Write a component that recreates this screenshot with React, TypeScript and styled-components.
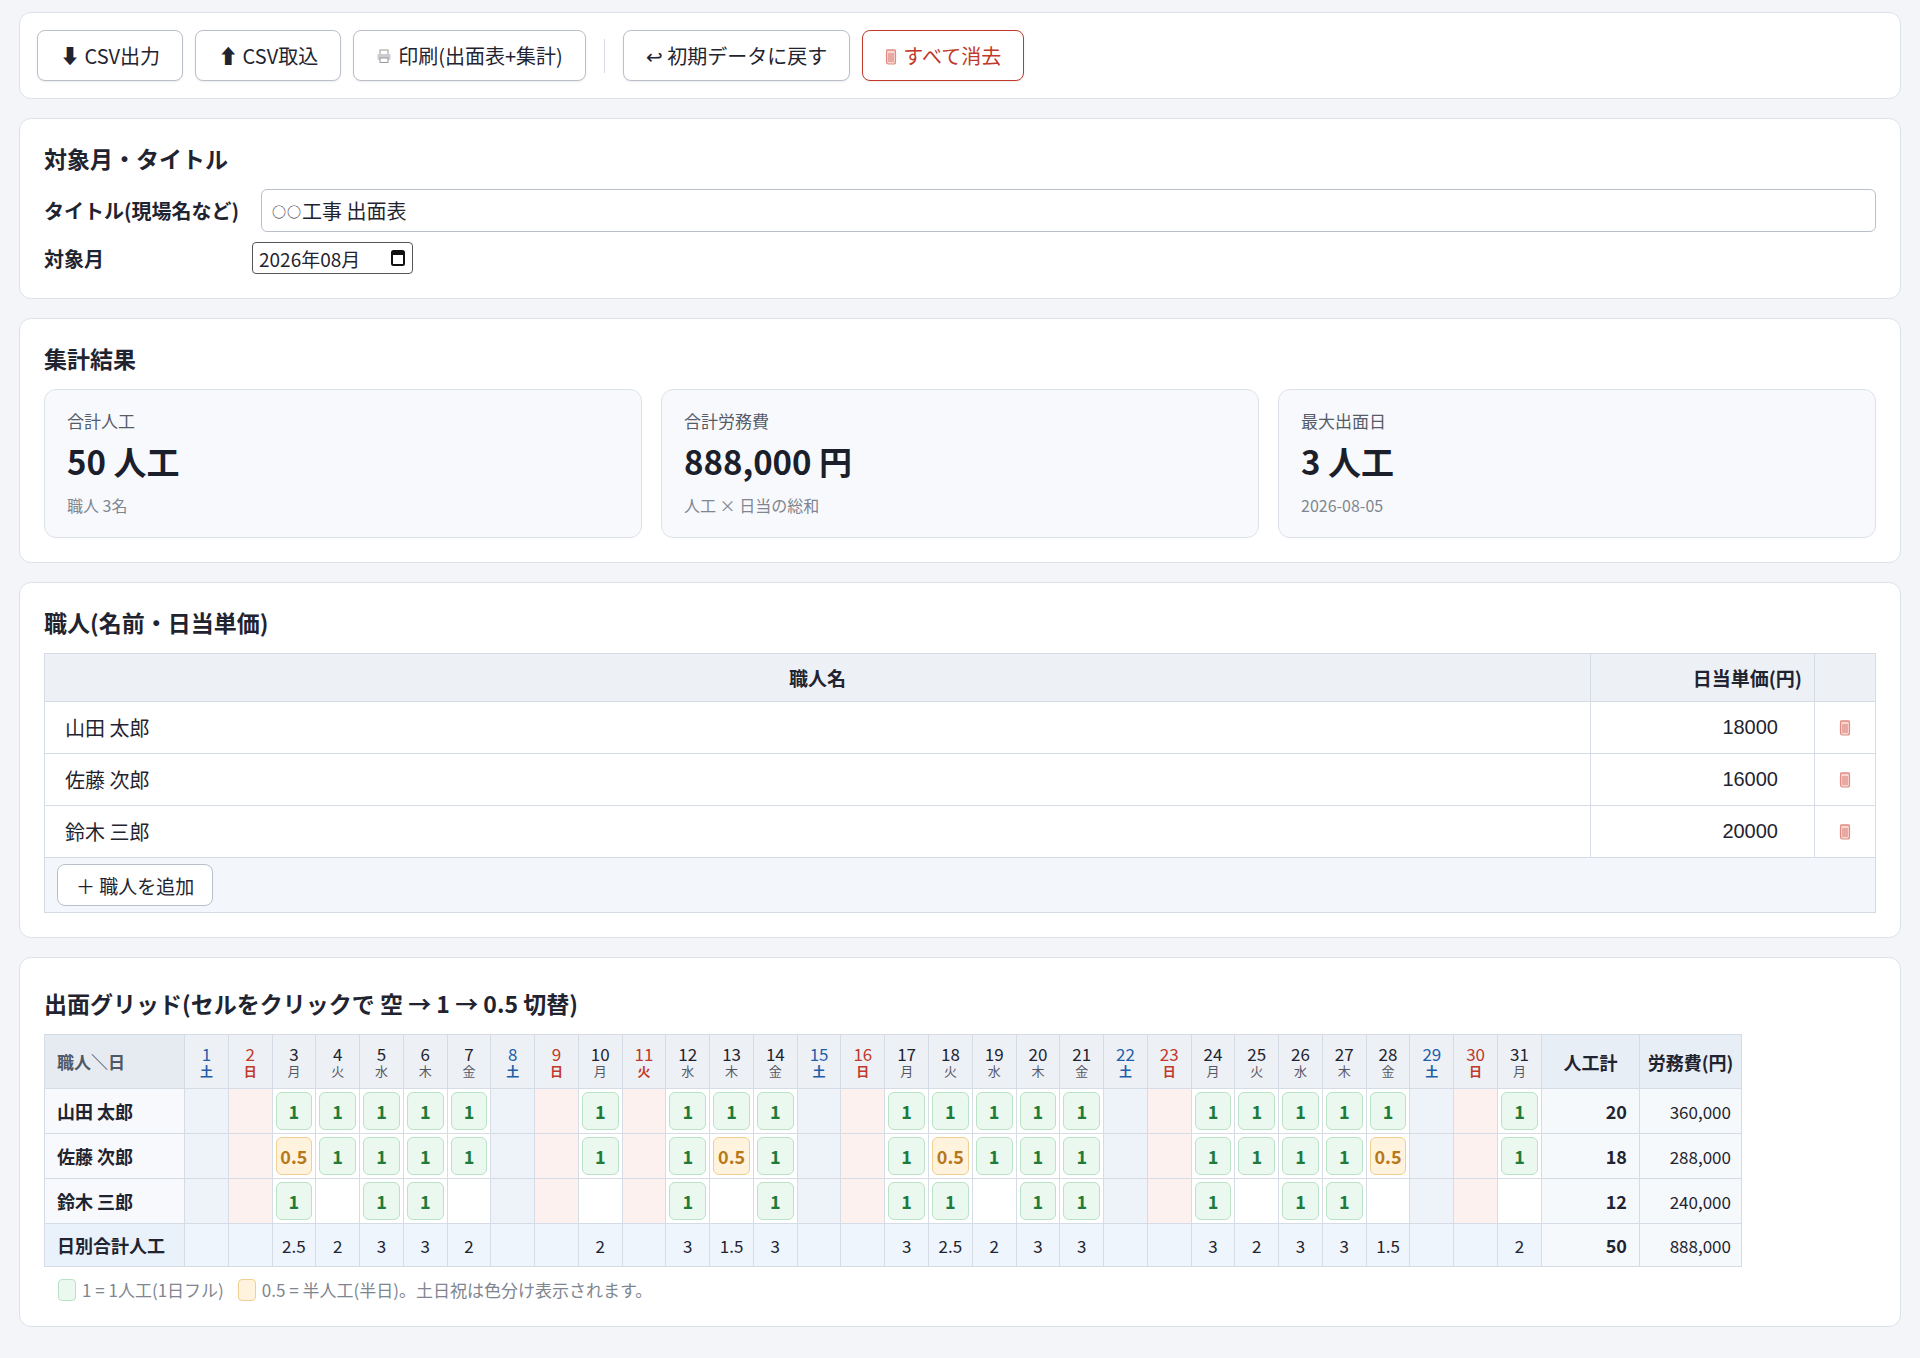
import React from "react";
import styled, { createGlobalStyle } from "styled-components";

const Global = createGlobalStyle`
  html, body { margin: 0; background: #f3f5f8; }
  body { font-family: "Noto Sans CJK JP", "Noto Sans", sans-serif; color: #1f2430; font-size: 19px; }
`;

const Page = styled.div`
  padding: 12px 19px 20px;
  display: flex; flex-direction: column; gap: 19px;
`;
const Card = styled.section<{ $pad?: string }>`
  background: #fff; border: 1.5px solid #dde2ea; border-radius: 12px;
  padding: ${p => p.$pad || "18px 24px 24px"};
`;
const Toolbar = styled.div`display: flex; align-items: center; gap: 12px;`;
const Btn = styled.button<{ $danger?: boolean }>`
  font-family: inherit; font-size: 20px; height: 51px; padding: 0 22px;
  background: #fff; border-radius: 8px; display: flex; align-items: center; gap: 6px;
  border: 1.5px solid ${p => p.$danger ? "#c0392b" : "#b9c0cb"};
  color: ${p => p.$danger ? "#c0392b" : "#1f2430"};
  box-shadow: 0 1px 2px rgba(0,0,0,0.08);
`;
const Sep = styled.div`width: 1px; height: 34px; background: #d5dae2; margin: 0 6px;`;
const H2 = styled.h2`font-size: 23px; font-weight: 700; margin: 4px 0 14px;`;
const FormRow = styled.div<{ $mt?: number }>`display: flex; align-items: center; margin-top: ${p => p.$mt || 0}px;`;
const Label = styled.label`font-weight: 700; width: 217px; flex: none; font-size: 20px;`;
const TextInput = styled.div`
  flex: 1; height: 41px; border: 1.5px solid #b9c0cb; border-radius: 6px;
  display: flex; align-items: center; padding: 0 10px; font-size: 20px;
`;
const Small = styled.span`font-size: 14px; letter-spacing: 1px;`;
const DateInput = styled.div`
  margin-left: -9px; width: 161px; height: 32px; border: 1.5px solid #555; border-radius: 4px;
  display: flex; align-items: center; justify-content: space-between; padding: 0 6px;
  font-size: 19px; box-sizing: border-box;
`;
const Stats = styled.div`display: grid; grid-template-columns: repeat(3, 1fr); gap: 19px;`;
const Stat = styled.div`
  background: #f8f9fc; border: 1.5px solid #dde2ea; border-radius: 12px; padding: 18px 22px 20px;
`;
const StatLabel = styled.div`font-size: 17px; color: #555c68;`;
const StatValue = styled.div`font-size: 33px; font-weight: 700; margin: 4px 0 8px; color: #1b1f2b;`;
const StatSub = styled.div`font-size: 16px; color: #80868f;`;

const WTable = styled.table`
  width: 100%; border-collapse: collapse; border: 1.5px solid #d6dce5;
  th, td { border: 1.5px solid #d6dce5; }
  th { background: #edf1f6; height: 45px; font-weight: 700; font-size: 19px; }
  td { height: 49px; font-size: 20px; }
`;
const NameTd = styled.td`padding: 0 20px;`;
const PriceTd = styled.td`text-align: right; padding: 0 36px; font-family: "Liberation Sans", Arial, sans-serif;`;
const DelTd = styled.td`text-align: center; width: 58px;`;
const AddRow = styled.td`background: #f3f6fa; padding: 6px 12px; height: auto !important;`;
const AddBtn = styled.button`
  font-family: inherit; font-size: 19px; height: 42px; padding: 0 18px; background: #fff;
  border: 1.5px solid #b9c0cb; border-radius: 8px; color: #1f2430;
`;

const GTable = styled.table`
  border-collapse: collapse; table-layout: fixed; width: 1698px;
  border: 1.5px solid #d6dce5;
  th, td { border: 1.5px solid #d6dce5; padding: 0; text-align: center; }
`;
const DayTh = styled.th<{ $kind: string }>`
  height: 53px; background: #edf1f6; font-weight: 400; line-height: 1.15;
  color: ${p => p.$kind === "sat" ? "#1e5fa8" : p.$kind === "sun" ? "#c0392b" : "#1f2430"};
`;
const DayNum = styled.div`font-size: 17px;`;
const Dow = styled.div<{ $weak?: boolean }>`font-size: 13px; opacity: ${p => p.$weak ? 0.75 : 1}; font-weight: ${p => p.$weak ? 400 : 700};`;
const CornerTh = styled.th`background: #e6ebf2; text-align: left !important; padding-left: 12px !important; font-weight: 700; font-size: 17px; color: #505866;`;
const SumTh = styled.th`background: #e8eef6; font-weight: 700; font-size: 18px;`;
const RowName = styled.td`background: #f7f9fc; text-align: left !important; padding-left: 12px !important; font-weight: 700; font-size: 18px; height: 44px;`;
const Cell = styled.td<{ $kind: string }>`
  background: ${p => p.$kind === "sat" ? "#eef2f9" : p.$kind === "sun" ? "#fdf1ef" : "#fff"};
  height: 44px;
`;
const Chip = styled.div<{ $half?: boolean }>`
  margin: 3px; height: 36px; border-radius: 6px; display: flex; align-items: center; justify-content: center;
  font-size: 18px; font-weight: 700;
  background: ${p => p.$half ? "#fff3de" : "#eaf8ef"};
  border: 1.5px solid ${p => p.$half ? "#f0cf93" : "#b9e2c6"};
  color: ${p => p.$half ? "#b8791a" : "#1e7b3a"};
`;
const TotTd = styled.td`background: #f6f9fc; text-align: right !important; padding-right: 12px !important; font-weight: 700; font-size: 18px;`;
const CostTd = styled.td`background: #f6f9fc; text-align: right !important; padding-right: 10px !important; font-size: 17px;`;
const SumRowName = styled.td`background: #e9f1fb; text-align: left !important; padding-left: 12px !important; font-weight: 700; font-size: 18px; height: 42px;`;
const SumCell = styled.td`background: #eef5fd; font-size: 17px;`;
const Legend = styled.div`display: flex; align-items: center; gap: 6px; margin-top: 10px; color: #80868f; font-size: 17px; padding-left: 14px;`;
const Swatch = styled.span<{ $half?: boolean }>`
  width: 16px; height: 20px; border-radius: 4px; display: inline-block; margin-left: ${p => p.$half ? 8 : 0}px;
  background: ${p => p.$half ? "#fff3de" : "#eaf8ef"}; border: 1.5px solid ${p => p.$half ? "#f0cf93" : "#b9e2c6"};
`;

const Trash = ({ c = "#e08b82" }) => (
  <svg width="12" height="18" viewBox="0 0 12 18" fill="none" stroke={c} strokeWidth="1.2">
    <rect x="1.5" y="3" width="9" height="14" rx="2" fill="#f8d6d2" />
    <path d="M1 3h10M4 6v9M6 6v9M8 6v9" />
  </svg>
);
const Printer = () => (
  <svg width="16" height="16" viewBox="0 0 16 16">
    <rect x="4" y="2" width="8" height="5" fill="#fff" stroke="#999" />
    <rect x="1.5" y="6" width="13" height="6" rx="1" fill="#c9cdd3" />
    <rect x="4" y="10" width="8" height="4.5" fill="#fff" stroke="#999" />
  </svg>
);
const Cal = () => (
  <svg width="16" height="18" viewBox="0 0 16 18"><rect x="2" y="2" width="12" height="14" rx="1.5" fill="none" stroke="#111" strokeWidth="2" /><rect x="2" y="2" width="12" height="4" fill="#111" /></svg>
);

const dows = ["土","日","月","火","水","木","金"];
const days = Array.from({ length: 31 }, (_, i) => {
  const d = i + 1; const w = dows[i % 7];
  const kind = w === "土" ? "sat" : (w === "日" || d === 11) ? "sun" : "wd";
  return { d, w, kind };
});
const mk = (s: string) => s.split(",").map(x => x === "" ? null : x);
const workers = [
  { name: "山田 太郎", price: "18000", total: 20, cost: "360,000",
    v: mk(",,1,1,1,1,1,,,1,,1,1,1,,,1,1,1,1,1,,,1,1,1,1,1,,,1") },
  { name: "佐藤 次郎", price: "16000", total: 18, cost: "288,000",
    v: mk(",,0.5,1,1,1,1,,,1,,1,0.5,1,,,1,0.5,1,1,1,,,1,1,1,1,0.5,,,1") },
  { name: "鈴木 三郎", price: "20000", total: 12, cost: "240,000",
    v: mk(",,1,,1,1,,,,,,1,,1,,,1,1,,1,1,,,1,,1,1,,,,") },
];
const sums = mk(",,2.5,2,3,3,2,,,2,,3,1.5,3,,,3,2.5,2,3,3,,,3,2,3,3,1.5,,,2");

export default function App() {
  return (
    <Page>
      <Global />
      <Card $pad="17px 17px">
        <Toolbar>
          <Btn>⬇ CSV出力</Btn>
          <Btn>⬆ CSV取込</Btn>
          <Btn><Printer />印刷(出面表+集計)</Btn>
          <Sep />
          <Btn>↩ 初期データに戻す</Btn>
          <Btn $danger><Trash />すべて消去</Btn>
        </Toolbar>
      </Card>
      <Card>
        <H2>対象月・タイトル</H2>
        <FormRow><Label>タイトル(現場名など)</Label><TextInput><Small>○○</Small>工事 出面表</TextInput></FormRow>
        <FormRow $mt={10}><Label>対象月</Label><DateInput>2026年08月<Cal /></DateInput></FormRow>
      </Card>
      <Card>
        <H2>集計結果</H2>
        <Stats>
          <Stat><StatLabel>合計人工</StatLabel><StatValue>50 人工</StatValue><StatSub>職人 3名</StatSub></Stat>
          <Stat><StatLabel>合計労務費</StatLabel><StatValue>888,000 円</StatValue><StatSub>人工 × 日当の総和</StatSub></Stat>
          <Stat><StatLabel>最大出面日</StatLabel><StatValue>3 人工</StatValue><StatSub>2026-08-05</StatSub></Stat>
        </Stats>
      </Card>
      <Card>
        <H2>職人(名前・日当単価)</H2>
        <WTable>
          <thead><tr><th>職人名</th><th style={{ width: 210, textAlign: "right", paddingRight: 12 }}>日当単価(円)</th><th style={{ width: 58 }}></th></tr></thead>
          <tbody>
            {workers.map(w => (
              <tr key={w.name}><NameTd>{w.name}</NameTd><PriceTd>{w.price}</PriceTd><DelTd><Trash /></DelTd></tr>
            ))}
            <tr><AddRow colSpan={3}><AddBtn>＋ 職人を追加</AddBtn></AddRow></tr>
          </tbody>
        </WTable>
      </Card>
      <Card>
        <H2 style={{ marginTop: 10 }}>出面グリッド(セルをクリックで 空 → 1 → 0.5 切替)</H2>
        <GTable>
          <colgroup>
            <col style={{ width: 140 }} />
            {days.map(d => <col key={d.d} />)}
            <col style={{ width: 98 }} /><col style={{ width: 102 }} />
          </colgroup>
          <thead>
            <tr>
              <CornerTh>職人＼日</CornerTh>
              {days.map(d => (
                <DayTh key={d.d} $kind={d.kind}><DayNum>{d.d}</DayNum><Dow $weak={d.kind === "wd"}>{d.w}</Dow></DayTh>
              ))}
              <SumTh>人工計</SumTh><SumTh>労務費(円)</SumTh>
            </tr>
          </thead>
          <tbody>
            {workers.map(w => (
              <tr key={w.name}>
                <RowName>{w.name}</RowName>
                {days.map((d, i) => (
                  <Cell key={d.d} $kind={d.kind}>{w.v[i] && <Chip $half={w.v[i] === "0.5"}>{w.v[i]}</Chip>}</Cell>
                ))}
                <TotTd>{w.total}</TotTd><CostTd>{w.cost}</CostTd>
              </tr>
            ))}
            <tr>
              <SumRowName>日別合計人工</SumRowName>
              {days.map((d, i) => <SumCell key={d.d}>{sums[i]}</SumCell>)}
              <TotTd>50</TotTd><CostTd>888,000</CostTd>
            </tr>
          </tbody>
        </GTable>
        <Legend><Swatch />1 = 1人工(1日フル)<Swatch $half />0.5 = 半人工(半日)。土日祝は色分け表示されます。</Legend>
      </Card>
    </Page>
  );
}
